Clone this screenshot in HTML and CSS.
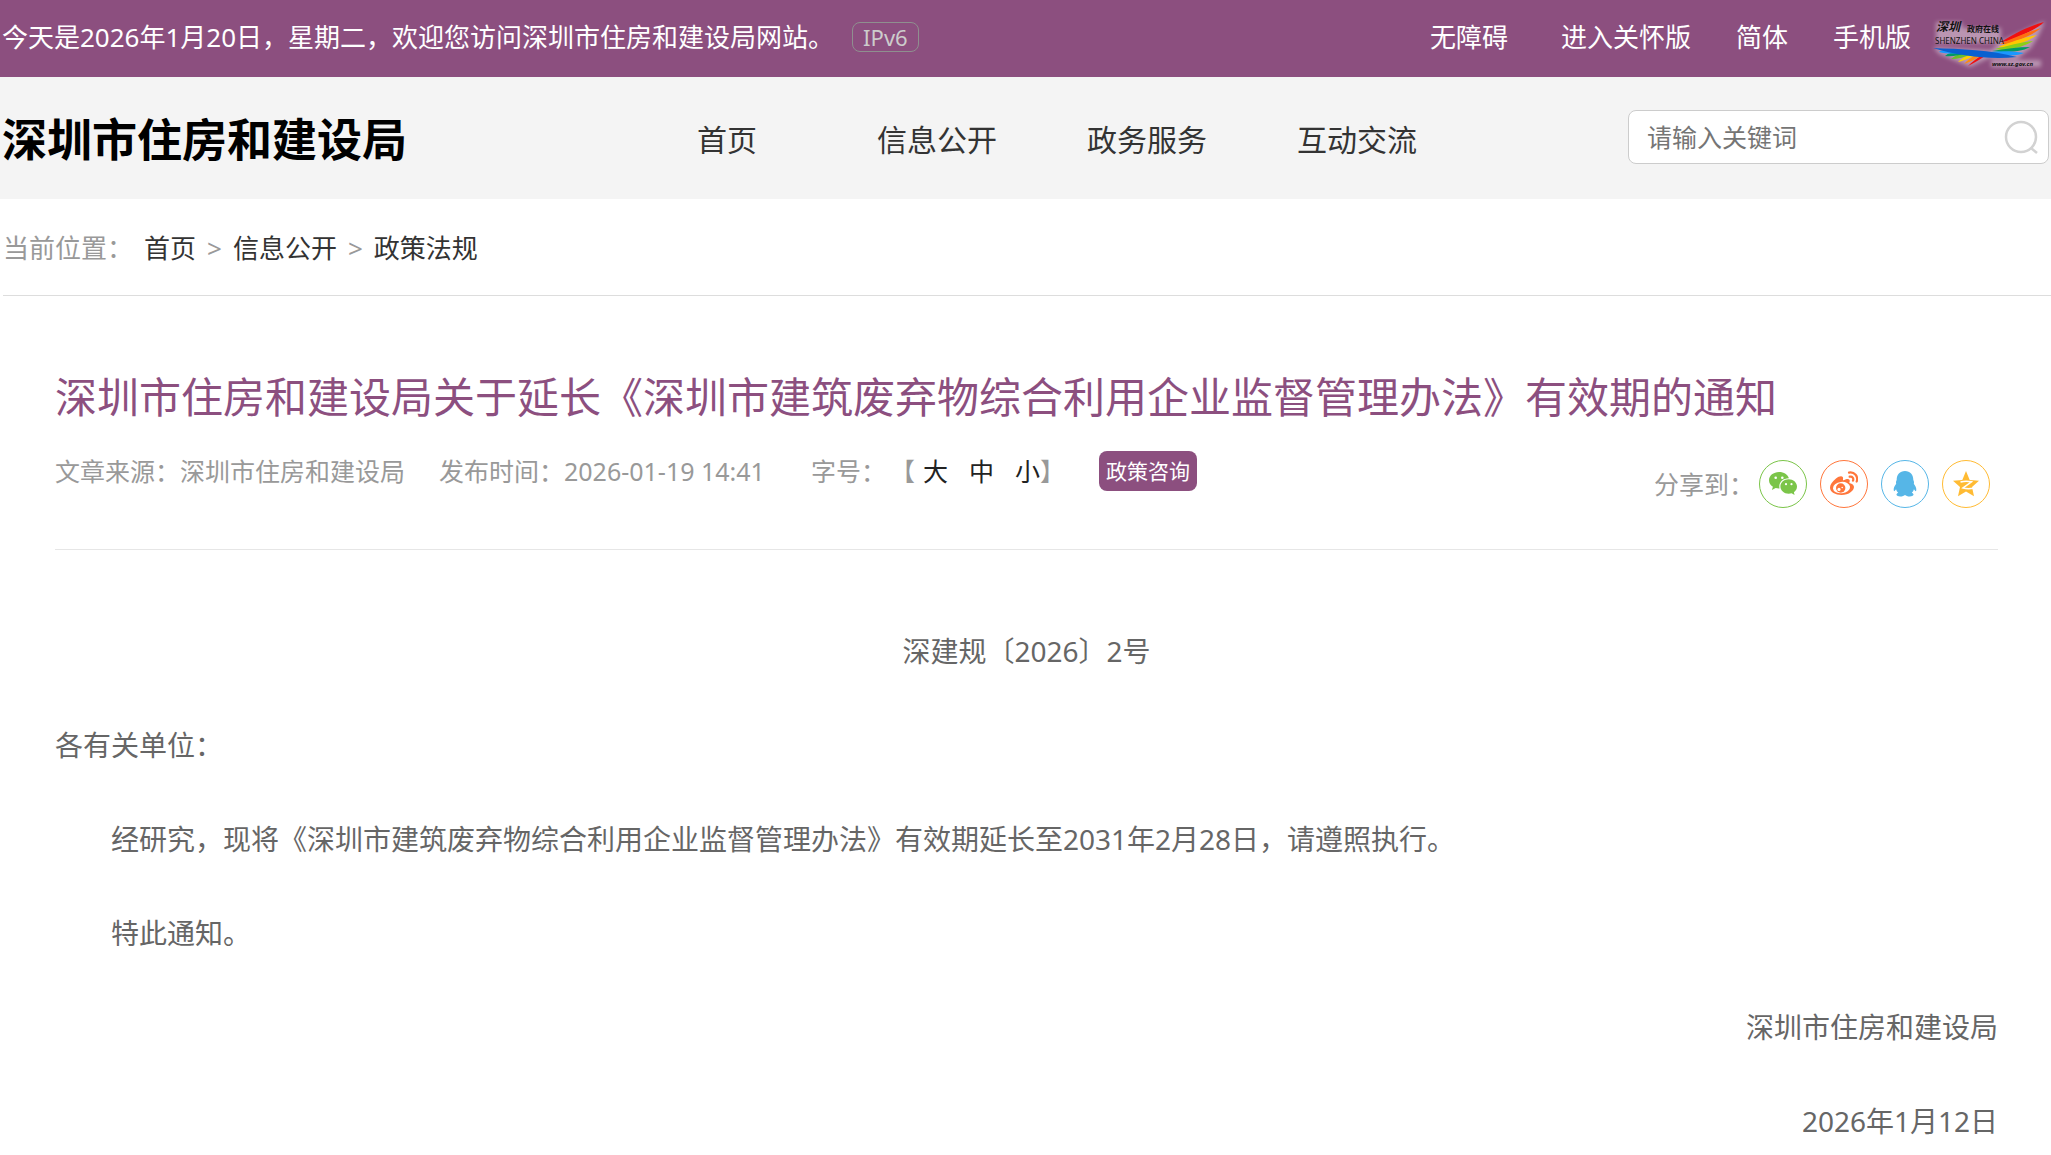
FILE: index.html
```html
<!DOCTYPE html>
<html lang="zh-CN">
<head>
  <meta charset="UTF-8">
  <title>深圳市住房和建设局</title>
  <link rel="stylesheet" href="styles.css">
</head>
<body>
  <div class="topbar">
    <p class="welcome">今天是2026年1月20日，星期二，欢迎您访问深圳市住房和建设局网站。</p>
    <span class="ipv6">IPv6</span>
    <div class="toplinks">
      <a class="barrier" href="#">无障碍</a>
      <a href="#">进入关怀版</a>
      <a href="#">简体</a>
      <a href="#">手机版</a>
    </div>
    <a class="szgov" href="#" aria-label="深圳政府在线">
      <svg width="118" height="56" viewBox="0 0 118 56">
        <g class="glow">
          <path d="M114 7L72 26L60 36L2 33L8 40L39 53L58 44L86 45L100 34L108 21Z"/>
          <path d="M5 8H31V14H70V29H5Z"/>
          <path d="M60 46H110V53H60Z"/>
        </g>
        <path fill="#f01010" d="M113 8C98 12 82 20 70 28L77 27C92 21 106 15 113 8Z"/>
        <path fill="#ff7010" d="M110 14C97 18 82 24 69 30L75 30C90 26 103 20 110 14Z"/>
        <path fill="#ffc800" d="M106 21C95 23 80 28 67 33L74 33C88 31 99 26 106 21Z"/>
        <path fill="#8ccf18" d="M102 27C90 28 76 32 64 35L72 36C85 35 96 31 102 27Z"/>
        <path fill="#009a64" d="M99 33C87 33 74 35 61 37L70 38C82 38 93 37 99 33Z"/>
        <path fill="#1a98ff" d="M93 39C82 37 70 37 58 38L66 40C77 42 87 42 93 39Z"/>
        <path fill="#f01010" d="M37 52C43 49 51 44 57 40L51 41C46 44 41 48 37 52Z"/>
        <path fill="#ff8a10" d="M33 50C39 48 46 44 51 41L45 41C40 43 36 47 33 50Z"/>
        <path fill="#ffd000" d="M27 48C33 47 40 43 46 41L39 41C34 42 30 45 27 48Z"/>
        <path fill="#6abf2a" d="M20 45C27 45 34 43 41 40L33 39C28 40 23 42 20 45Z"/>
        <path fill="#009a64" d="M14 42C21 43 29 41 36 39L27 38C22 38 17 39 14 42Z"/>
        <path fill="#1a98ff" d="M8 38C16 40 27 40 36 38L20 36C15 36 10 36 8 38Z"/>
        <path fill="#0a60d0" d="M2 34C30 35 60 36 86 43C60 46 28 42 2 34Z"/>
        <text class="sz-brush" x="5" y="17">深圳</text>
        <text class="sz-small" x="36" y="18">政府在线</text>
        <text class="sz-latin" x="4" y="30">SHENZHEN CHINA</text>
        <text class="sz-url" x="61" y="52">www.sz.gov.cn</text>
      </svg>
    </a>
  </div>

  <header class="header">
    <h1 class="sitename">深圳市住房和建设局</h1>
    <nav class="nav">
      <a href="#">首页</a>
      <a href="#">信息公开</a>
      <a href="#">政务服务</a>
      <a href="#">互动交流</a>
    </nav>
    <form class="search">
      <input type="text" placeholder="请输入关键词" aria-label="请输入关键词">
      <button type="button" aria-label="搜索">
        <svg width="34" height="34" viewBox="0 0 34 34" fill="none" stroke="#d2d2d2" stroke-width="2.500">
          <circle cx="17" cy="17" r="15"/>
          <path d="M27 28L33 33"/>
        </svg>
      </button>
    </form>
  </header>

  <div class="crumbs">
    <span class="here">当前位置：</span>
    <a href="#">首页</a>
    <span class="sep">&gt;</span>
    <a href="#">信息公开</a>
    <span class="sep">&gt;</span>
    <a href="#">政策法规</a>
  </div>

  <main class="article">
    <h2 class="title">深圳市住房和建设局关于延长《深圳市建筑废弃物综合利用企业监督管理办法》有效期的通知</h2>
    <div class="meta">
      <span class="source">文章来源：深圳市住房和建设局</span>
      <span class="date">发布时间：2026-01-19 14:41</span>
      <div class="fontsize">
        <span>字号：</span>
        <span class="bracket">【</span>
        <div class="sizes">
          <button type="button">大</button>
          <button type="button">中</button>
          <button type="button">小</button>
        </div>
        <span>】</span>
      </div>
      <a class="consult" href="#">政策咨询</a>
      <div class="share">
        <span class="share-label">分享到：</span>
        <a class="wechat" href="#" aria-label="微信">
          <svg width="28" height="28" viewBox="0 0 28 28">
            <path fill="#7bc549" d="M10 2C4.500 2 0 5.600 0 10.200C0 12.900 1.500 15.200 3.900 16.700L2.900 20L6.700 18C7.900 18.300 9.300 18.500 10.500 18.400C9.300 12.700 13.800 8.200 19.900 8.300C18.900 4.600 15 2 10 2Z"/>
            <path fill="#7bc549" d="M28 16.500C28 12.500 24.200 9.300 19.700 9.300C15 9.300 11.400 12.500 11.400 16.500C11.400 20.500 15 23.700 19.700 23.700C20.700 23.700 21.700 23.500 22.600 23.300L25.600 25L24.900 22.200C26.800 20.900 28 18.800 28 16.500Z"/>
            <g fill="#fff"><circle cx="6.700" cy="7.700" r="1.300"/><circle cx="13.300" cy="7.700" r="1.300"/><circle cx="17" cy="14.200" r="1.100"/><circle cx="22.500" cy="14.200" r="1.100"/></g>
          </svg>
        </a>
        <a class="weibo" href="#" aria-label="微博">
          <svg width="28" height="28" viewBox="0 0 28 28">
            <path fill="#ff763b" d="M20 13.200C19 12.900 19.400 12.300 19.700 11.500C20.200 9 18 8 13.700 10.200C12.800 10.600 12.800 10.200 13 9.500C13.900 5.500 10 5.200 6 8.500C2.500 11.300 0 14.700 0 17.600C0 22.300 5.500 25 11.500 25C19 25 24 20.500 24 17C24 14.900 22 13.800 20 13.200Z"/>
            <ellipse cx="11.500" cy="17.600" rx="8.600" ry="5.700" fill="#fff" transform="rotate(-6 11.500 17.600)"/>
            <circle cx="10.700" cy="18" r="4.700" fill="#ff763b"/>
            <circle cx="9" cy="19.400" r="1.600" fill="#fff"/><circle cx="12.200" cy="17.500" r=".8" fill="#fff"/>
            <path fill="none" stroke="#ff763b" stroke-width="2.200" stroke-linecap="round" d="M19 2.600C24.500 1.600 28.500 6.500 26.700 11.500M19.700 6.700C22.500 6.200 23.900 8.300 23 10.700"/>
          </svg>
        </a>
        <a class="qq" href="#" aria-label="QQ">
          <svg width="28" height="28" viewBox="0 0 28 28">
            <path fill="#56b6e7" d="M14 1C8.800 1 5.700 4.800 5.700 9.700C5.700 10.400 5 11 5 12.300C5 13 5 13.400 5.200 13.700C3.400 15.900 2.600 18 2.700 20C2.800 21.600 3.300 21.700 5.100 19.300C5.400 20.700 6.200 21.900 7.200 22.800C4.200 24.200 5.200 26.400 9.200 26.400C11.400 26.400 13 25.800 14 24.900C15 25.800 16.600 26.400 18.800 26.400C22.800 26.400 23.800 24.200 20.800 22.800C21.800 21.900 22.600 20.700 22.900 19.300C24.700 21.700 25.200 21.600 25.300 20C25.400 18 24.600 15.900 22.800 13.700C23 13.400 23 13 23 12.300C23 11 22.300 10.400 22.300 9.700C22.300 4.800 19.200 1 14 1Z"/>
          </svg>
        </a>
        <a class="qzone" href="#" aria-label="QQ空间">
          <svg width="28" height="28" viewBox="0 0 28 28">
            <path fill="#ffbb33" d="M14 1L17.700 9.900L27 10.700L20 17L22 26.200L14 21.400L6 26.200L8 17L1 10.700L10.300 9.900Z"/>
            <path fill="none" stroke="#fff" stroke-width="1.500" d="M8.500 12C12 11 16 11 19.500 11.800L11 18C14 18.700 18 18.800 21.500 18.200"/>
          </svg>
        </a>
      </div>
    </div>

    <div class="content">
      <p class="center">深建规〔2026〕2号</p>
      <p>各有关单位：</p>
      <p class="indent">经研究，现将《深圳市建筑废弃物综合利用企业监督管理办法》有效期延长至2031年2月28日，请遵照执行。</p>
      <p class="indent">特此通知。</p>
      <p class="right">深圳市住房和建设局</p>
      <p class="right">2026年1月12日</p>
    </div>
  </main>
</body>
</html>
```
FILE: styles.css
```css
*, *:before, *:after {
  box-sizing: border-box;
}

body {
  margin: 0;
  background: #fff;
  color: #333;
  font-family: "Noto Sans", "Noto Sans CJK SC", sans-serif;
  font-size: 26px;
  line-height: 40px;
}

h1, h2, p {
  margin: 0;
  font-weight: normal;
}

a {
  color: inherit;
  text-decoration: none;
}

button {
  padding: 0;
  border: 0;
  background: none;
  color: inherit;
  font: inherit;
  cursor: pointer;
}

svg {
  display: block;
}

/* top bar */
.topbar {
  display: flex;
  align-items: center;
  height: 77px;
  padding: 0 2px 4px;
  background: #8c4f7f;
  color: #fff;
}

.ipv6 {
  margin-left: 18px;
  padding: 0 10px;
  border: 1px solid #8f8f8f;
  border-radius: 8px;
  color: #ccc;
  font-size: 22px;
  line-height: 28px;
}

.toplinks {
  display: flex;
  gap: 45px;
  margin-left: auto;
}

.barrier {
  margin-right: 8px;
}

.szgov {
  margin: 10px 0 0 20px;
}

.glow {
  fill: #fff;
  opacity: 0.4;
  filter: blur(2px);
}

.szgov text {
  fill: #111;
}

.sz-brush {
  font-size: 12px;
  font-weight: bold;
  font-style: italic;
}

.sz-small {
  font-size: 8px;
  font-weight: bold;
}

.sz-latin {
  font-size: 8px;
}

.sz-url {
  font-size: 6px;
  font-weight: bold;
  font-style: italic;
}

/* header */
.header {
  display: flex;
  align-items: center;
  height: 122px;
  padding: 3px 2px 0;
  background: #f4f4f4;
}

.sitename {
  color: #000;
  font-size: 45px;
  font-weight: bold;
  line-height: 60px;
}

.nav {
  display: flex;
  margin-left: 215px;
  font-size: 30px;
}

.nav a {
  width: 210px;
  text-align: center;
}

.search {
  display: flex;
  align-items: center;
  width: 421px;
  height: 54px;
  margin: 0 0 5px auto;
  padding: 0 10px 0 18px;
  border: 1px solid #ccc;
  border-radius: 8px;
  background: #fff;
}

.search input {
  flex: 1;
  min-width: 0;
  padding: 0;
  border: 0;
  outline: 0;
  background: none;
  font-family: inherit;
  font-size: 25px;
}

.search input::placeholder {
  color: #757575;
}

/* breadcrumb */
.crumbs {
  display: flex;
  align-items: center;
  gap: 11px;
  height: 97px;
  margin-left: 3px;
  padding-top: 2px;
  border-bottom: 1px solid #ddd;
}

.here, .sep {
  color: #999;
}

/* article */
.article {
  padding: 73px 53px 0 55px;
}

.title {
  color: #8c4f7f;
  font-size: 42px;
  line-height: 56px;
}

.meta {
  display: flex;
  align-items: flex-start;
  height: 125px;
  padding-top: 26px;
  border-bottom: 1px solid #e6e6e6;
  color: #999;
  font-size: 25px;
}

.source {
  margin-right: 34px;
}

.date {
  margin-right: 46px;
}

.fontsize {
  display: flex;
}

.bracket {
  margin-left: 4px;
}

.sizes {
  display: flex;
  gap: 21px;
  padding-left: 8px;
  color: #222;
}

.consult {
  margin-left: 34px;
  padding: 0 7px;
  border-radius: 8px;
  background: #8c4f7f;
  color: #fff;
  font-size: 21px;
}

.share {
  display: flex;
  align-items: center;
  margin: 9px 8px 0 auto;
}

.share-label {
  margin-right: 5px;
}

.share a {
  display: flex;
  align-items: center;
  justify-content: center;
  width: 48px;
  height: 48px;
  border: 1px solid;
  border-radius: 50%;
}

.share a + a {
  margin-left: 13px;
}

.wechat { color: #7bc549; }
.weibo { color: #ff763b; }
.qq { color: #56b6e7; }
.qzone { color: #ffbb33; }

.content {
  padding-top: 73px;
  color: #666;
  font-size: 28px;
  line-height: 56px;
}

.content p + p {
  margin-top: 38px;
}

.center {
  text-align: center;
}

.indent {
  text-indent: 2em;
}

.right {
  text-align: right;
}
```
